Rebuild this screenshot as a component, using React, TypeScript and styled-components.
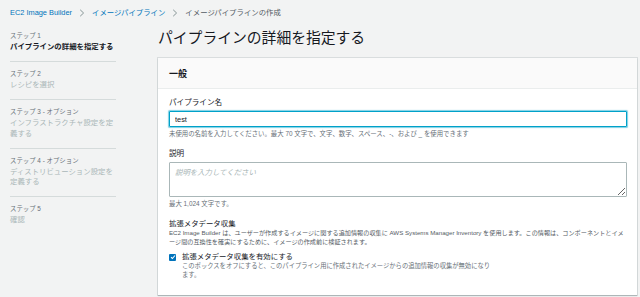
import React from 'react';
import styled, { createGlobalStyle } from 'styled-components';

const GlobalStyle = createGlobalStyle`
  html, body {
    margin: 0;
    padding: 0;
    background: #f2f3f3;
  }
  body {
    font-family: 'Liberation Sans', 'Noto Sans CJK JP', sans-serif;
    color: #16191f;
    overflow: hidden;
  }
`;

const steps = [
  { step: 'ステップ 1', title: 'パイプラインの詳細を指定する', active: true },
  { step: 'ステップ 2', title: 'レシピを選択' },
  { step: 'ステップ 3 - オプション', title: 'インフラストラクチャ設定を定義する' },
  { step: 'ステップ 4 - オプション', title: 'ディストリビューション設定を定義する' },
  { step: 'ステップ 5', title: '確認' },
];

const Chevron = () => (
  <svg width="6" height="8" viewBox="0 0 6 8">
    <path d="M1.2 0.8 L4.6 4 L1.2 7.2" fill="none" stroke="#879596" strokeWidth="1" />
  </svg>
);

const App = () => {
  return (
    <Page>
      <GlobalStyle />
      <Breadcrumbs>
        <Crumb link>EC2 Image Builder</Crumb>
        <Chevron />
        <Crumb link>イメージパイプライン</Crumb>
        <Chevron />
        <Crumb>イメージパイプラインの作成</Crumb>
      </Breadcrumbs>
      <Content>
        <Nav>
          {steps.map((s) => (
            <NavItem key={s.step}>
              <StepLabel>{s.step}</StepLabel>
              <StepTitle active={s.active}>{s.title}</StepTitle>
            </NavItem>
          ))}
        </Nav>
        <Main>
          <Heading>パイプラインの詳細を指定する</Heading>
          <Panel>
            <PanelHeader>一般</PanelHeader>
            <PanelBody>
              <Field>
                <Label>パイプライン名</Label>
                <TextInput defaultValue="test" />
                <Hint>
                  未使用の名前を入力してください。最大 70 文字で、文字、数字、スペース、-、および _ を使用できます
                </Hint>
              </Field>
              <Field>
                <Label>説明</Label>
                <TextArea placeholder="説明を入力してください" />
                <Hint>最大 1,024 文字です。</Hint>
              </Field>
              <Section>
                <SectionTitle>拡張メタデータ収集</SectionTitle>
                <Description>
                  EC2 Image Builder は、ユーザーが作成するイメージに関する追加情報の収集に AWS Systems Manager
                  Inventory を使用します。この情報は、コンポーネントとイメージ間の互換性を確実にするために、イメージの作成前に検証されます。
                </Description>
                <CheckRow>
                  <CheckBox>
                    <svg width="6" height="6" viewBox="0 0 6 6">
                      <path d="M1 3.1 L2.4 4.5 L5 1.5" fill="none" stroke="#fff" strokeWidth="1.1" />
                    </svg>
                  </CheckBox>
                  <div>
                    <CheckLabel>拡張メタデータ収集を有効にする</CheckLabel>
                    <CheckHint>
                      このボックスをオフにすると、このパイプライン用に作成されたイメージからの追加情報の収集が無効になります。
                    </CheckHint>
                  </div>
                </CheckRow>
              </Section>
            </PanelBody>
          </Panel>
        </Main>
      </Content>
    </Page>
  );
};

export default App;

const Page = styled.div`
  width: 640px;
  height: 297px;
  box-sizing: border-box;
  padding: 0 3px 0 10px;
  overflow: hidden;
`;

const Breadcrumbs = styled.div`
  height: 24px;
  display: flex;
  align-items: center;
  gap: 7px;
  padding-top: 2px;
  box-sizing: border-box;
`;

const Crumb = styled.span<{ link?: boolean }>`
  font-size: 7.4px;
  line-height: 10px;
  color: ${({ link }) => (link ? '#0073bb' : '#545b64')};
`;

const Content = styled.div`
  display: flex;
  gap: 42px;
`;

const Nav = styled.div`
  width: 106px;
  flex-shrink: 0;
`;

const NavItem = styled.div`
  padding: 7px 0 8.5px;
  border-bottom: 1px solid #d5dbdb;

  &:last-child {
    border-bottom: none;
  }
`;

const StepLabel = styled.div`
  font-size: 6.4px;
  line-height: 10px;
  color: #687078;
  margin-bottom: 1px;
`;

const StepTitle = styled.div<{ active?: boolean }>`
  font-size: 7.4px;
  line-height: 10.5px;
  font-weight: ${({ active }) => (active ? 700 : 400)};
  color: ${({ active }) => (active ? '#16191f' : '#aab7b8')};
`;

const Main = styled.div`
  flex: 1;
  min-width: 0;
`;

const Heading = styled.h1`
  margin: 4px 0 10px;
  font-size: 14.8px;
  line-height: 20px;
  font-weight: 400;
  color: #16191f;
`;

const Panel = styled.div`
  background: #fff;
  box-shadow: 0 0 0 1px rgba(0, 28, 36, 0.1), 0 1px 1px rgba(0, 28, 36, 0.2);
`;

const PanelHeader = styled.div`
  height: 31px;
  box-sizing: border-box;
  display: flex;
  align-items: center;
  padding: 0 11px;
  background: #fafafa;
  border-bottom: 1px solid #eaeded;
  font-size: 9px;
  font-weight: 700;
`;

const PanelBody = styled.div`
  padding: 9px 10px 16px 11px;
`;

const Field = styled.div`
  margin-bottom: 10px;
`;

const Label = styled.div`
  font-size: 7.6px;
  line-height: 10px;
  color: #16191f;
  margin-bottom: 3px;
`;

const TextInput = styled.input`
  display: block;
  width: 100%;
  height: 16px;
  box-sizing: border-box;
  border: 1px solid #00a1c9;
  box-shadow: 0 0 1px 0.5px rgba(0, 161, 201, 0.5);
  border-radius: 1px;
  padding: 0 5px;
  font-family: inherit;
  font-size: 7.4px;
  color: #16191f;
  outline: none;
`;

const TextArea = styled.textarea`
  display: block;
  width: 100%;
  height: 35px;
  box-sizing: border-box;
  border: 1px solid #aab7b8;
  border-radius: 1px;
  padding: 3px 5px;
  font-family: inherit;
  font-size: 7.4px;
  color: #16191f;
  outline: none;
  resize: vertical;

  &::placeholder {
    color: #aab7b8;
    font-style: italic;
  }
`;

const Hint = styled.div`
  font-size: 6.4px;
  line-height: 10px;
  margin-top: 2px;
  color: #687078;
`;

const Section = styled.div`
  margin-top: 6px;
`;

const SectionTitle = styled.div`
  font-size: 7.4px;
  line-height: 10px;
  color: #16191f;
`;

const Description = styled.div`
  font-size: 6.15px;
  line-height: 8.5px;
  color: #545b64;
`;

const CheckRow = styled.div`
  display: flex;
  align-items: flex-start;
  gap: 6px;
  margin-top: 6px;
`;

const CheckBox = styled.span`
  width: 7px;
  height: 7px;
  margin-top: 1.5px;
  flex-shrink: 0;
  border-radius: 1px;
  background: #0073bb;
  display: flex;
  align-items: center;
  justify-content: center;
`;

const CheckLabel = styled.div`
  font-size: 7.4px;
  line-height: 10px;
  color: #16191f;
`;

const CheckHint = styled.div`
  max-width: 313.5px;
  font-size: 6.3px;
  line-height: 8.5px;
  color: #687078;
`;
